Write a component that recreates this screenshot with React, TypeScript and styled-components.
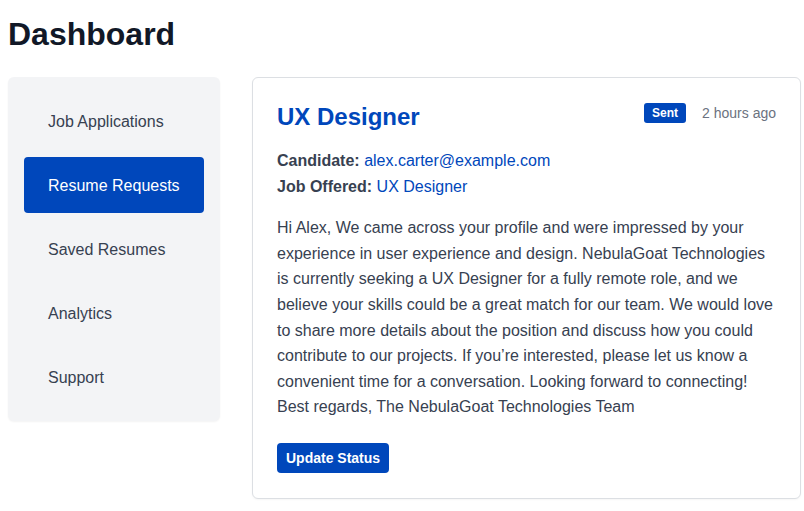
import React, { useState } from "react";
import { styled, createGlobalStyle } from "styled-components";

const GlobalStyle = createGlobalStyle`
  html, body {
    margin: 0;
    padding: 0;
    background: #ffffff;
  }
  body {
    font-family: "Liberation Sans", Arial, sans-serif;
    color: #374151;
  }
`;

const Page = styled.div`
  padding: 15px 3px 12px 8px;
`;

const Title = styled.h1`
  margin: 0 0 24px;
  font-size: 32px;
  line-height: 38px;
  font-weight: 700;
  color: #111827;
`;

const Layout = styled.div`
  display: flex;
  align-items: flex-start;
  gap: 32px;
`;

const Sidebar = styled.nav`
  width: 212px;
  flex-shrink: 0;
  box-sizing: border-box;
  padding: 16px;
  background: #f3f4f6;
  border-radius: 6px;
  box-shadow: 0 1px 2px rgba(0, 0, 0, 0.05);
  display: flex;
  flex-direction: column;
  gap: 8px;
`;

const NavItem = styled.a<{ $active?: boolean }>`
  display: flex;
  align-items: center;
  height: 56px;
  padding: 2px 24px 0;
  box-sizing: border-box;
  border-radius: 4px;
  font-size: 16px;
  white-space: nowrap;
  text-decoration: none;
  cursor: pointer;
  color: ${(p) => (p.$active ? "#ffffff" : "#374151")};
  background: ${(p) => (p.$active ? "#0047bb" : "transparent")};
`;

const Card = styled.section`
  flex: 1;
  box-sizing: border-box;
  padding: 23px 24px 25px;
  border: 1px solid #dcdfe3;
  border-radius: 6px;
  background: #ffffff;
  box-shadow: 0 1px 2px rgba(0, 0, 0, 0.04);
`;

const CardHeader = styled.div`
  display: flex;
  justify-content: space-between;
  align-items: flex-start;
  margin-bottom: 15px;
`;

const JobTitle = styled.h2`
  margin: 0;
  font-size: 24px;
  line-height: 32px;
  font-weight: 700;
  color: #0047bb;
`;

const HeaderMeta = styled.div`
  display: flex;
  align-items: center;
  gap: 16px;
  height: 24px;
`;

const Badge = styled.span`
  display: inline-flex;
  align-items: center;
  height: 20px;
  padding: 0 8px;
  border-radius: 3px;
  background: #0047bb;
  color: #ffffff;
  font-size: 12px;
  font-weight: 700;
`;

const TimeAgo = styled.span`
  font-size: 14px;
  color: #6b7280;
`;

const MetaLine = styled.div`
  font-size: 16px;
  line-height: 25.6px;
  color: #374151;
`;

const Label = styled.strong`
  font-weight: 700;
`;

const LinkText = styled.span`
  color: #0047bb;
`;

const Message = styled.p`
  margin: 16px 0 23px;
  font-size: 16px;
  line-height: 25.6px;
  color: #374151;
`;

const Button = styled.button`
  display: block;
  height: 30px;
  padding: 0 9px;
  border: none;
  border-radius: 4px;
  background: #0047bb;
  color: #ffffff;
  font-family: "Liberation Sans", Arial, sans-serif;
  font-size: 14px;
  font-weight: 700;
  cursor: pointer;
`;

const navItems = [
  "Job Applications",
  "Resume Requests",
  "Saved Resumes",
  "Analytics",
  "Support",
];

export default function App() {
  const [active, setActive] = useState("Resume Requests");

  return (
    <>
      <GlobalStyle />
      <Page>
        <Title>Dashboard</Title>
        <Layout>
          <Sidebar>
            {navItems.map((item) => (
              <NavItem
                key={item}
                $active={item === active}
                onClick={() => setActive(item)}
              >
                {item}
              </NavItem>
            ))}
          </Sidebar>
          <Card>
            <CardHeader>
              <JobTitle>UX Designer</JobTitle>
              <HeaderMeta>
                <Badge>Sent</Badge>
                <TimeAgo>2 hours ago</TimeAgo>
              </HeaderMeta>
            </CardHeader>
            <MetaLine>
              <Label>Candidate:</Label>{" "}
              <LinkText>alex.carter@example.com</LinkText>
            </MetaLine>
            <MetaLine>
              <Label>Job Offered:</Label> <LinkText>UX Designer</LinkText>
            </MetaLine>
            <Message>
              Hi Alex, We came across your profile and were impressed by your
              experience in user experience and design. NebulaGoat Technologies
              is currently seeking a UX Designer for a fully remote role, and we
              believe your skills could be a great match for our team. We would
              love to share more details about the position and discuss how you
              could contribute to our projects. If you’re interested, please let
              us know a convenient time for a conversation. Looking forward to
              connecting! Best regards, The NebulaGoat Technologies Team
            </Message>
            <Button>Update Status</Button>
          </Card>
        </Layout>
      </Page>
    </>
  );
}
